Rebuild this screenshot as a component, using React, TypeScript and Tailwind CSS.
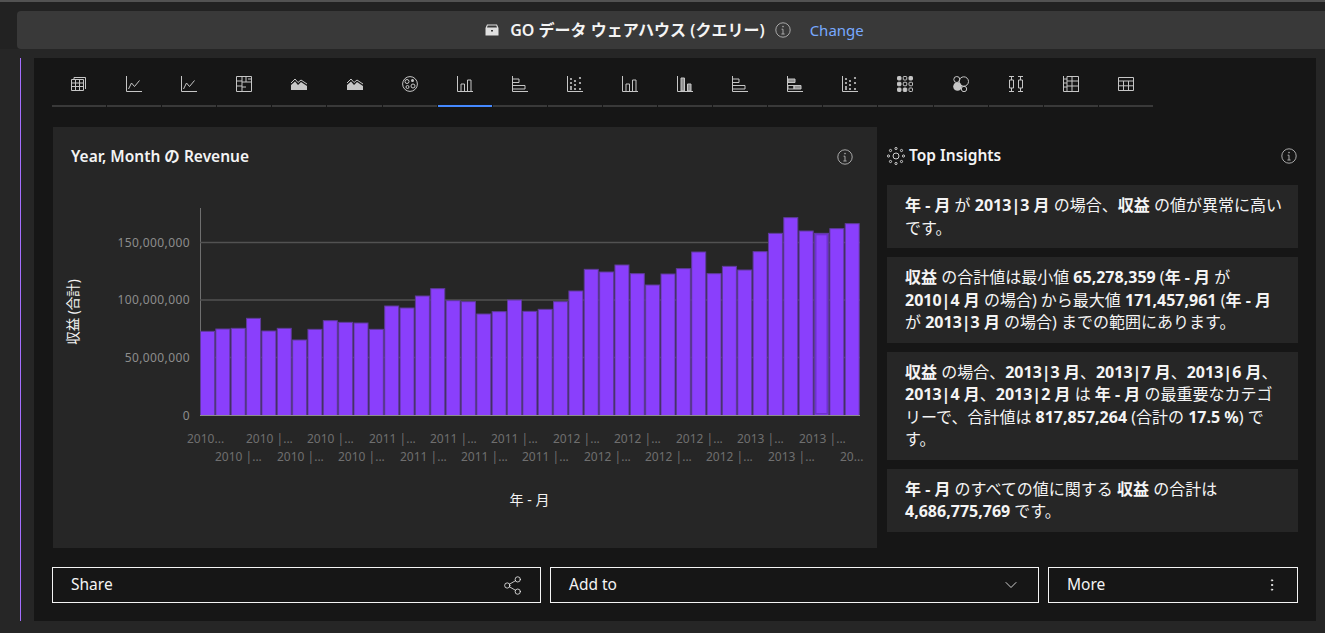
import type { ReactNode } from 'react'
import { ChevronDown, EllipsisVertical, Share2 } from 'lucide-react'

const font = "font-['Noto_Sans','Noto_Sans_CJK_JP',sans-serif]"

// bar tops read off the screenshot, y = px from top of the chart svg
const barTops = [604, 597, 595, 565, 603, 595, 630, 598, 572, 577, 579, 598, 528, 534, 498, 476, 512, 515, 552, 545, 510, 544, 538, 515, 483, 418, 426, 405, 431, 465, 432, 416, 366, 431, 409, 420, 365, 310, 263, 303, 310, 296, 281]

const rowOne = [[187, '2010...'], [246, '2010 |...'], [307, '2010 |...'], [369, '2011 |...'], [430, '2011 |...'], [491, '2011 |...'], [553, '2012 |...'], [614, '2012 |...'], [676, '2012 |...'], [737, '2013 |...'], [799, '2013 |...']] as const
const rowTwo = [[215, '2010 |...'], [277, '2010 |...'], [338, '2010 |...'], [400, '2011 |...'], [461, '2011 |...'], [522, '2011 |...'], [584, '2012 |...'], [645, '2012 |...'], [706, '2012 |...'], [768, '2013 |...'], [840, '20...']] as const

const Info = ({ className = '' }: { className?: string }) => (
    <svg viewBox="0 0 16 16" className={`w-4 h-4 text-[#a8a8a8] ${className}`} fill="none" stroke="currentColor">
        <circle cx="8" cy="8" r="7.2" />
        <path d="M6.4 12h3.2M8 12V7.2H6.6" />
        <circle cx="8" cy="4.6" r="0.8" fill="currentColor" stroke="none" />
    </svg>
)

const Axes = () => <path d="M.5 0v15.5H16" />
const Line = () => <><Axes /><path d="M2.5 13l3-6 3 3.5 5-6" /></>
const Area = () => <><path d="M0 7l4-4 3 3.5L10 4l6 4" /><path d="M0 14V9l4-3.5 3 3.5 3-3 6 4v4z" fill="currentColor" stroke="none" /></>
const Bars = () => <><Axes /><path d="M4 15V8h3.500v7M10.500 15V4H14v11" /></>
const HBars = () => <><Axes /><path d="M1 3h6v3.500H1M1 9.500h12V13H1" /></>
const Dots = () => (
    <>
        <Axes />
        {[[4, 3], [4, 7], [4, 11], [8, 5], [8, 9], [8, 13], [13, 2], [13, 7], [13, 13], [4, 13]].map(([x, y]) => (
            <circle key={`${x}-${y}`} cx={x} cy={y} r="1.100" fill="currentColor" stroke="none" />
        ))}
    </>
)

// which cells of the 3x3 icon are solid
const cells = [[1, 0, 1], [1, 0, 0], [1, 1, 0]]

const icons: ReactNode[] = [
    <path d="M3 3V1.500h11.500V13M.5 3.500h12v11H.5zM.5 7h12M.5 10.500h12M4.500 3.500v11M8.500 3.500v11" />,
    <Line />,
    <Line />,
    <path d="M.5.500h15v15H.5zM6 .5v15M6 6h9.500M.5 5H6M.5 10H6M10 .5V6M12 3h3.500M6 11h4" />,
    <Area />,
    <Area />,
    <>
        <circle cx="8" cy="8" r="7.400" />
        <circle cx="5" cy="5.500" r="2" />
        <circle cx="10.500" cy="4.500" r="1.500" fill="currentColor" stroke="none" />
        <circle cx="11" cy="10" r="2" />
        <circle cx="5.500" cy="11" r="1.500" />
    </>,
    <Bars />,
    <HBars />,
    <Dots />,
    <Bars />,
    <><Axes /><path d="M4 15V2h3.500v13z" fill="currentColor" fillOpacity=".7" /><path d="M10.500 15V8H14v7z" fill="currentColor" fillOpacity=".7" /></>,
    <HBars />,
    <><Axes /><path d="M1 3h7v3.500H1z" fill="currentColor" fillOpacity=".7" /><path d="M1 9.500h6V13H1z" /><path d="M7 9.500h7V13H7z" fill="currentColor" fillOpacity=".7" /></>,
    <Dots />,
    <>
        {cells.flatMap((row, r) => row.map((solid, c) => (
            <rect key={`${r}-${c}`} x={0.5 + c * 5.750} y={0.5 + r * 5.750} width="3.500" height="3.500" rx=".8" fill={solid ? 'currentColor' : 'none'} />
        )))}
    </>,
    <>
        <circle cx="3.800" cy="3.500" r="3" />
        <circle cx="10.800" cy="5.500" r="4.700" />
        <circle cx="4.500" cy="10.500" r="4.300" fill="currentColor" stroke="none" />
        <circle cx="11" cy="13" r="2.700" />
    </>,
    <path d="M1 .5h5M3.500.5V4M1 15.500h5M3.500 12v3.500M1.500 4h4v8h-4zM10 .5h5M12.500.5V4M10 15.500h5M12.500 12v3.500M10.500 4h4v8h-4z" />,
    <><Axes /><path d="M4 .5h11.500v15M4 .5v15M9 .5v15M4 5h11.500M4 10h11.500M1 3h3M1 7h3M1 11h3" /></>,
    <path d="M.5 1.500h15v13H.5zM.5 5h15M.5 9.800h15M5.500 5v9.500M10.500 5v9.500" />,
]

const Tabs = () => (
    <div className="flex w-[1102px] h-[49px]">
        {icons.map((icon, i) => (
            <div key={i} className={`flex-1 flex items-center justify-center border-b-2 mr-px pt-[5px] ${i === 7 ? 'border-[#4589ff]' : 'border-[#393939]'}`}>
                <svg viewBox="0 0 16 16" className="w-4 h-4 text-[#c6c6c6]" fill="none" stroke="currentColor">{icon}</svg>
            </div>
        ))}
    </div>
)

const Chart = () => (
    <svg width="824" height="421" viewBox="53 127 824 421" className="block absolute left-0 top-0" fontSize="12">
        <path d="M200.500 208v207" stroke="#6f6f6f" />
        {[242.500, 300, 357.500].map(y => <path key={y} d={`M200 ${y}h660`} stroke="#525252" strokeWidth="1.500" />)}
        {barTops.map((top, i) => {
            const y = 130 + top / 3
            const x = 200.500 + i * 15.350
            return (
                <g key={i}>
                    <rect x={x} y={y} width={14} height={415.500 - y} fill="#8a3ffc" stroke="#5f3b9c" />
                    {i === 40 && <rect x={x + 1.250} y={y + 1.250} width={11.500} height={412.500 - y} fill="#8a3ffc" stroke="#6e30d0" strokeWidth="1.500" />}
                </g>
            )
        })}
        <path d="M200 415.500h660" stroke="#8d8d8d" />
        <g fill="#8d8d8d" textAnchor="end" letterSpacing=".4">
            <text x="190" y="247">150,000,000</text>
            <text x="190" y="304">100,000,000</text>
            <text x="190" y="362">50,000,000</text>
            <text x="190" y="420">0</text>
        </g>
        <g fill="#6f6f6f">
            {rowOne.map(([x, t]) => <text key={x} x={x} y="443">{t}</text>)}
            {rowTwo.map(([x, t]) => <text key={x} x={x} y="461">{t}</text>)}
        </g>
        <text x="529.500" y="505" fill="#f4f4f4" textAnchor="middle" fontSize="14">年 - 月</text>
        <text transform="translate(78 312) rotate(-90)" fill="#f4f4f4" textAnchor="middle" fontSize="13.500">収益 (合計)</text>
    </svg>
)

const Insight = ({ children }: { children: ReactNode }) => (
    <div className="bg-[#262626] px-[18px] py-[9px] text-base leading-[22.5px] whitespace-nowrap text-[#f4f4f4]">{children}</div>
)

const Action = ({ label, icon, className }: { label: string, icon: ReactNode, className: string }) => (
    <button className={`h-9 border border-[#f4f4f4] pl-[18px] pr-[17px] flex items-center justify-between text-[15.5px] text-[#f4f4f4] ${className}`}>
        <span>{label}</span>
        {icon}
    </button>
)

const App = () => {
    return (
        <div className={`${font} w-[1325px] h-[633px] overflow-hidden bg-[#262626] border-t-2 border-[#525252]`}>
            <div className="pl-[17px] pt-[9px] bg-[#222222]">
                <div className="h-[38px] bg-[#393939] rounded-l flex items-center justify-center pl-[6px]">
                    <svg viewBox="0 0 16 16" className="w-4 h-4 mr-[10px] text-[#e0e0e0]" fill="currentColor">
                        <path d="M3 2.500h10l1.500 3.500v7.500h-13V6zM3.700 3.500L3 5.500h10l-.7-2zM7 8v1.500h2V8z" fillRule="evenodd" />
                    </svg>
                    <span className="text-base font-semibold text-[#f4f4f4]">GO データ ウェアハウス (クエリー)</span>
                    <Info className="ml-[10px]" />
                    <span className="ml-[19px] text-[15px] text-[#78a9ff]">Change</span>
                </div>
            </div>
            <div className="flex mt-[9px] h-[563px]">
                <div className="ml-5 w-px bg-[#a56eff]" />
                <div className="ml-[13px] w-[1282px] bg-[#161616] pl-[18px] pr-[18px] flex flex-col">
                    <Tabs />
                    <div className="flex mt-5 gap-[10px]">
                        <div className="relative ml-px w-[824px] h-[421px] bg-[#262626]">
                            <div className="flex items-center justify-between pl-[18px] pr-6 pt-[18px]">
                                <span className="text-[15.500px] font-semibold text-[#f4f4f4]">Year, Month の Revenue</span>
                                <Info />
                            </div>
                            <Chart />
                        </div>
                        <div className="w-[411px] flex flex-col gap-[9px]">
                            <div className="h-[49px] pt-[9px] flex items-center justify-between pr-px">
                                <span className="flex items-center gap-[4px] text-[15.500px] font-semibold text-[#f4f4f4]">
                                    <svg viewBox="0 0 18 18" className="w-[18px] h-[18px] text-[#d0d0d0]" fill="none" stroke="currentColor">
                                        <circle cx="9" cy="9" r="3" />
                                        {[[9, 1.500], [14.500, 3.500], [16.500, 9], [14.500, 14.500], [9, 16.500], [3.500, 14.500], [1.500, 9], [3.500, 3.500]].map(([x, y]) => (
                                            <circle key={`${x}-${y}`} cx={x} cy={y} r="1.100" />
                                        ))}
                                    </svg>
                                    Top Insights
                                </span>
                                <Info />
                            </div>
                            <Insight><b>年 - 月</b> が <b>2013|3 月</b> の場合、<b>収益</b> の値が異常に高い<br />です。</Insight>
                            <Insight><b>収益</b> の合計値は最小値 <b>65,278,359</b> (<b>年 - 月</b> が<br /><b>2010|4 月</b> の場合) から最大値 <b>171,457,961</b> (<b>年 - 月</b><br />が <b>2013|3 月</b> の場合) までの範囲にあります。</Insight>
                            <Insight><b>収益</b> の場合、<b>2013|3 月</b>、<b>2013|7 月</b>、<b>2013|6 月</b>、<br /><b>2013|4 月</b>、<b>2013|2 月</b> は <b>年 - 月</b> の最重要なカテゴ<br />リーで、合計値は <b>817,857,264</b> (合計の <b>17.5 %</b>) で<br />す。</Insight>
                            <Insight><b>年 - 月</b> のすべての値に関する <b>収益</b> の合計は<br /><b>4,686,775,769</b> です。</Insight>
                        </div>
                    </div>
                    <div className="flex gap-[9px] mt-[19px]">
                        <Action label="Share" className="w-[489px]" icon={<Share2 size={21} strokeWidth={0.9} />} />
                        <Action label="Add to" className="w-[489px]" icon={<ChevronDown size={20} strokeWidth={1} />} />
                        <Action label="More" className="w-[250px]" icon={<EllipsisVertical size={16} strokeWidth={1.500} />} />
                    </div>
                </div>
            </div>
        </div>
    )
}

export default App
